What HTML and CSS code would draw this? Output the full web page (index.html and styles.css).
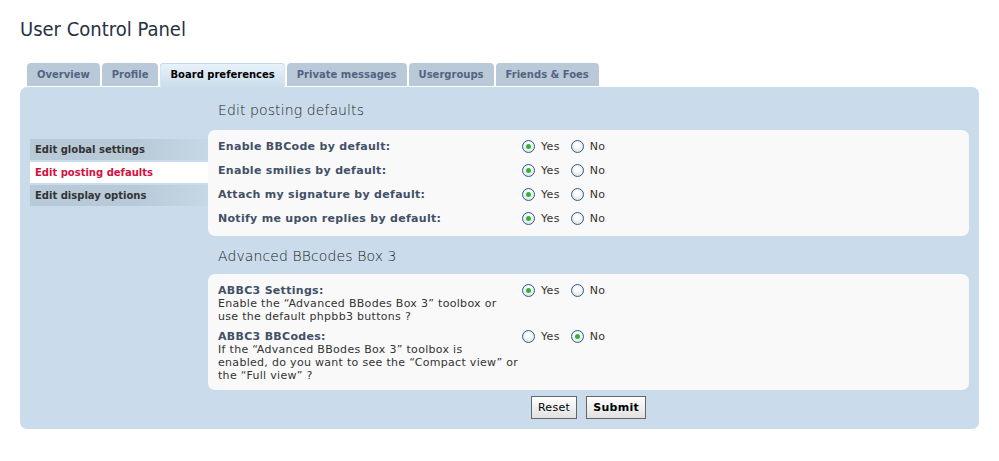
FILE: index.html
```html
<!DOCTYPE html>
<html>
<head>
<meta charset="utf-8">
<link rel="stylesheet" href="styles.css">
</head>
<body>
<div class="page">
  <h2 class="title">User Control Panel</h2>
  <ul class="tabs">
    <li class="tab">Overview</li>
    <li class="tab">Profile</li>
    <li class="tab active">Board preferences</li>
    <li class="tab">Private messages</li>
    <li class="tab">Usergroups</li>
    <li class="tab">Friends &amp; Foes</li>
  </ul>
  <div class="panel">
    <ul class="menu">
      <li class="mitem">Edit global settings</li>
      <li class="mitem current">Edit posting defaults</li>
      <li class="mitem">Edit display options</li>
    </ul>
    <div class="main">
      <h3 class="heading">Edit posting defaults</h3>
      <div class="box box1">
        <div class="row"><div class="label"><b>Enable BBCode by default:</b></div><div class="opts"><span class="radio on"></span><span class="opt">Yes</span><span class="radio"></span><span class="opt">No</span></div></div>
        <div class="row"><div class="label"><b>Enable smilies by default:</b></div><div class="opts"><span class="radio on"></span><span class="opt">Yes</span><span class="radio"></span><span class="opt">No</span></div></div>
        <div class="row"><div class="label"><b>Attach my signature by default:</b></div><div class="opts"><span class="radio on"></span><span class="opt">Yes</span><span class="radio"></span><span class="opt">No</span></div></div>
        <div class="row"><div class="label"><b>Notify me upon replies by default:</b></div><div class="opts"><span class="radio on"></span><span class="opt">Yes</span><span class="radio"></span><span class="opt">No</span></div></div>
      </div>
      <h3 class="heading h3b">Advanced BBcodes Box 3</h3>
      <div class="box box2">
        <div class="trow"><div class="label"><b>ABBC3 Settings:</b><br>Enable the “Advanced BBodes Box 3” toolbox or<br>use the default phpbb3 buttons ?</div><div class="opts"><span class="radio on"></span><span class="opt">Yes</span><span class="radio"></span><span class="opt">No</span></div></div>
        <div class="trow"><div class="label"><b>ABBC3 BBCodes:</b><br>If the “Advanced BBodes Box 3” toolbox is<br>enabled, do you want to see the “Compact view” or<br>the “Full view” ?</div><div class="opts"><span class="radio"></span><span class="opt">Yes</span><span class="radio on"></span><span class="opt">No</span></div></div>
      </div>
      <div class="buttons"><button class="btn">Reset</button><button class="btn strong">Submit</button></div>
    </div>
  </div>
</div>
</body>
</html>
```
FILE: styles.css
```css
html, body { margin: 0; padding: 0; background: #fff; }
body { font-family: "DejaVu Sans", Verdana, sans-serif; font-size: 11px; color: #333; letter-spacing: 0.3px; }
.page { padding: 0 20px; }
.title { margin: 0; padding-top: 16px; font-size: 20px; font-weight: normal; color: #28313f; line-height: 26px; height: 47px; letter-spacing: 0; font-family: "DejaVu Sans Condensed", "DejaVu Sans", sans-serif; }
.tabs { list-style: none; margin: 0 0 0 7px; padding: 0; display: flex; gap: 2px; height: 24px; }
.tab { height: 23px; line-height: 23px; padding: 0 10px; background: #b9c9d8; color: #536482; font-weight: bold; font-size: 10px; letter-spacing: 0; border-radius: 4px 4px 0 0; }
.tab.active { background: linear-gradient(#e9f3fb, #cadceb); color: #000; height: 25px; position: relative; z-index: 1; box-shadow: inset 0 1px 0 #c7d7e5, inset 1px 0 0 #d6e4f0, inset -1px 0 0 #d6e4f0; }
.panel { background: #cadceb; border-radius: 7px; padding: 13px 10px 10px 10px; display: grid; grid-template-columns: 178px 1fr; }
.menu { list-style: none; margin: 39px 0 0 0; padding: 0; display: flex; flex-direction: column; gap: 2px; }
.mitem { height: 21px; line-height: 21px; padding-left: 5px; font-weight: bold; font-size: 10px; letter-spacing: 0; color: #333; background: linear-gradient(to right, #b8c9d8 60%, #c6d7e6); }
.mitem.current { background: #fff; color: #d31141; }
.heading { margin: 0 0 10px 10px; font-size: 14px; line-height: 20px; font-weight: 200; color: #222; letter-spacing: 0.1px; }
.h3b { margin-top: 10px; margin-bottom: 8px; }
.box { background: #f9f9f9; border-radius: 7px; padding: 4px 10px 6px 10px; }
.row { height: 24px; display: flex; align-items: center; }
.row b, .trow b { color: #425067; letter-spacing: 0.3px; }
.label { width: 304px; flex: none; white-space: nowrap; }
.opts { display: flex; align-items: center; }
.radio { width: 11px; height: 11px; border-radius: 50%; border: 1px solid #2c5f8c; background: radial-gradient(circle at 50% 40%, #fff 20%, #dcdcdc 90%); position: relative; flex: none; }
.radio.on::after { content: ""; position: absolute; left: 3px; top: 3px; width: 5px; height: 5px; border-radius: 50%; background: #2fb43a; }
.opt { margin-left: 6px; margin-right: 11px; color: #333; }
.box2 { padding: 10px 10px 8px 10px; display: flex; flex-direction: column; gap: 7px; }
.trow { display: flex; align-items: flex-start; line-height: 13px; }
.trow .opts { height: 13px; }
.buttons { display: flex; justify-content: center; gap: 9px; margin-top: 6px; }
.btn { height: 23px; border: 1px solid #666; background: linear-gradient(#fff, #e0e0e0); font-family: "DejaVu Sans", Verdana, sans-serif; font-size: 11px; letter-spacing: 0.3px; color: #000; padding: 0 6px; border-radius: 0; }
.btn.strong { font-weight: bold; }
```
